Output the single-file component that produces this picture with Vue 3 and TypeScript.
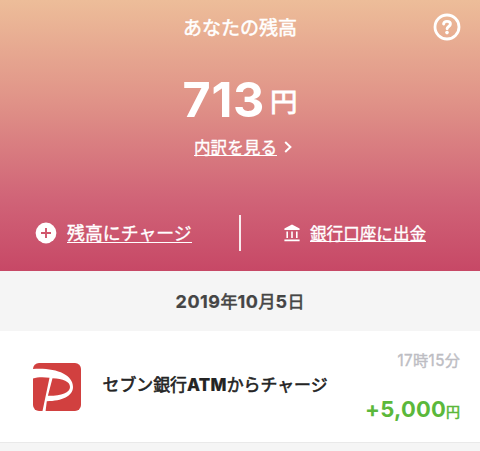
<script setup lang="ts">
interface Entry {
  label: string
  time: string
  amount: string
}

const balance: number = 713
const date: string = '2019年10月5日'
const entries: Entry[] = [
  { label: 'セブン銀行ATMからチャージ', time: '17時15分', amount: '+5,000' },
]

// Splits text into Latin and Japanese runs, which carry different weights.
const runs = (text: string): string[] => text.match(/[\x21-\x7e]+|[^\x21-\x7e]+/g) ?? []
const isLatin = (run: string): boolean => /^[\x21-\x7e]/.test(run)
</script>

<template>
  <main class="wallet">
    <header class="hero">
      <div class="bar">
        <h1>あなたの残高</h1>
        <svg class="help" viewBox="0 0 28 28" fill="none" stroke="#fff">
          <circle cx="14" cy="14" r="12" stroke-width="2.8" />
          <path d="M10.6 11C10.8 9.2 12.1 8.4 14 8.4C16.1 8.4 17.4 9.5 17.4 11.1C17.4 13.5 14.1 13.5 14.1 15.8" stroke-width="2.9" stroke-linecap="round" />
          <circle cx="14" cy="19.6" r="1.8" fill="#fff" stroke="none" />
        </svg>
      </div>
      <div class="balance">
        <span class="value">{{ balance }}</span><span class="yen">円</span>
      </div>
      <div class="details">
        <span class="link">内訳を見る</span>
        <svg viewBox="0 0 8 12" fill="none" stroke="#fff" stroke-width="2"><path d="M1.2 1L6.4 6L1.2 11" /></svg>
      </div>
      <nav class="actions">
        <div class="action charge">
          <svg viewBox="0 0 22 22">
            <circle cx="11" cy="11" r="10.4" fill="#fff" />
            <path d="M11 6V16M6 11H16" stroke="#d0566c" stroke-width="1.9" />
          </svg>
          <span class="link">残高にチャージ</span>
        </div>
        <div class="divider"></div>
        <div class="action withdraw">
          <svg viewBox="0 0 16 18" fill="#fff">
            <path d="M8 .5L15.6 4.6V6H.4V4.6ZM2.4 7.6H4V14H2.4ZM7.2 7.6H8.8V14H7.2ZM12 7.6H13.6V14H12ZM.4 15.5H15.6V17.3H.4Z" />
          </svg>
          <span class="link">銀行口座に出金</span>
        </div>
      </nav>
    </header>
    <h2><span v-for="(run, i) in runs(date)" :key="i" :class="{ latin: isLatin(run) }">{{ run }}</span></h2>
    <section v-for="entry in entries" :key="entry.label" class="entry">
      <svg class="logo" viewBox="0 0 48 48">
        <rect width="48" height="48" rx="6" fill="#d1403f" />
        <path fill="#fff" fill-rule="evenodd" d="M0 6C22 4.5 40 11 40 24C40 33 29 38 13.8 38.2L12.6 48H9.5L16.5 14.7C10 13.8 4 14 0 15.6ZM19.5 15.3L14.9 32.8C28 33 37 30 37 24C37 18.5 30 15.8 19.5 15.3Z" />
      </svg>
      <p class="label"><span v-for="(run, i) in runs(entry.label)" :key="i" :class="{ latin: isLatin(run) }">{{ run }}</span></p>
      <div class="figures">
        <span class="time">{{ entry.time }}</span>
        <span class="amount">{{ entry.amount }}<small>円</small></span>
      </div>
    </section>
  </main>
</template>

<style>
body {
  margin: 0;
  background: #f5f5f5;
}
</style>

<style scoped>
.wallet {
  height: 451px;
  overflow: hidden;
  background: #f5f5f5;
  font-family: Inter, 'Noto Sans CJK JP', sans-serif;
  white-space: nowrap;
}
h1, h2, p {
  margin: 0;
}
svg {
  display: block;
  flex: none;
}
.hero {
  box-sizing: border-box;
  height: 271px;
  color: #fff;
  background: linear-gradient(#edbd99, #e09388 37%, #d06377 74%, #c74866);
}
.bar {
  display: grid;
  grid-template-columns: 1fr auto 1fr;
  align-items: center;
  height: 54px;
  padding: 0 19px;
}
h1 {
  grid-column: 2;
  padding-top: 4px;
  font-size: 19px;
  font-weight: 400;
  line-height: 28px;
  -webkit-text-stroke: 0.5px #fff;
}
.help {
  justify-self: end;
  width: 28px;
  height: 28px;
}
.balance {
  display: flex;
  justify-content: center;
  align-items: flex-start;
  height: 78px;
}
.value {
  font-size: 48.5px;
  font-weight: 700;
  line-height: 92px;
  letter-spacing: 0.7px;
}
.yen {
  margin-left: 5px;
  font-size: 27.5px;
  font-weight: 400;
  line-height: 97px;
  -webkit-text-stroke: 0.8px #fff;
}
.details {
  display: flex;
  justify-content: center;
  align-items: center;
  gap: 7px;
  height: 30px;
  padding-left: 6px;
}
.details svg {
  width: 8px;
  height: 12px;
}
.link {
  padding-top: 2px;
  font-size: 16.6px;
  font-weight: 400;
  line-height: 14px;
  border-bottom: 1.4px solid #fff;
  -webkit-text-stroke: 0.35px #fff;
}
.actions {
  display: flex;
  align-items: center;
  margin-top: 53px;
  height: 36px;
}
.action {
  display: flex;
  align-items: center;
  box-sizing: border-box;
}
.charge {
  width: 239px;
  padding-left: 35px;
  gap: 10px;
}
.charge svg {
  width: 22px;
  height: 22px;
}
.charge .link {
  font-size: 17.9px;
  line-height: 16px;
}
.divider {
  width: 2px;
  height: 36px;
  background: #ffffffe0;
}
.withdraw {
  padding-left: 43px;
  gap: 10px;
}
.withdraw svg {
  width: 16px;
  height: 18px;
}
h2 {
  height: 60px;
  color: #454545;
  font-size: 17px;
  font-weight: 400;
  line-height: 61px;
  text-align: center;
  -webkit-text-stroke: 0.6px #454545;
}
.latin {
  font-weight: 700;
  -webkit-text-stroke-width: 0.2px;
}
h2 .latin {
  font-size: 18px;
  letter-spacing: 0.5px;
}
.entry {
  display: flex;
  align-items: center;
  box-sizing: border-box;
  height: 112px;
  padding: 0 20px 0 32.5px;
  background: #fff;
  border-bottom: 1px solid #e9e9e9;
}
.logo {
  width: 48px;
  height: 48px;
}
.label {
  margin: 0 0 3px 22px;
  color: #242424;
  font-size: 16.9px;
  font-weight: 400;
  line-height: 24px;
  -webkit-text-stroke: 0.6px #242424;
}
.label .latin {
  font-weight: 800;
  letter-spacing: 0.3px;
}
.figures {
  display: flex;
  flex: 1;
  flex-direction: column;
  align-items: flex-end;
  gap: 21px;
  padding-top: 3px;
}
.time {
  margin-right: -0.4px;
  color: #bdbdc3;
  font-size: 15.2px;
  font-weight: 400;
  line-height: 24px;
  letter-spacing: 0.4px;
  -webkit-text-stroke: 0.4px #bdbdc3;
}
.amount {
  color: #5bb83b;
  font-size: 22px;
  font-weight: 700;
  line-height: 30px;
  letter-spacing: 0.2px;
}
.amount small {
  font-size: 14px;
  font-weight: 400;
  letter-spacing: 0;
  -webkit-text-stroke: 0.6px #5bb83b;
}
</style>
